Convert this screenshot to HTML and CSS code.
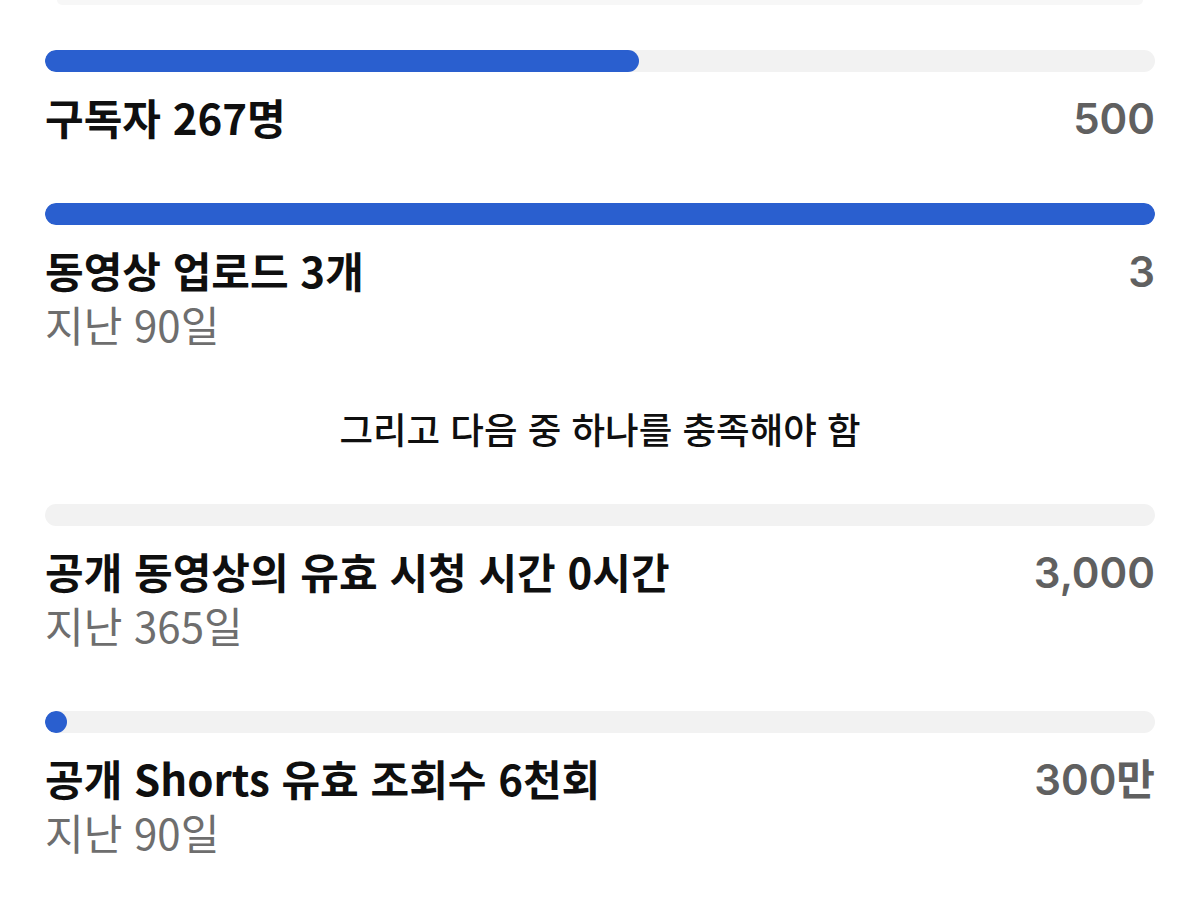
FILE: index.html
```html
<!DOCTYPE html>
<html lang="ko">
<head>
<meta charset="utf-8">
<link rel="stylesheet" href="styles.css">
</head>
<body>
<div class="page">
  <div class="top-edge"></div>
  <div class="list">
    <div class="item">
      <div class="track"><div class="fill" style="width:53.5%"></div></div>
      <div class="row">
        <div class="title">구독자 267명</div>
        <div class="value">500</div>
      </div>
    </div>
    <div class="item">
      <div class="track"><div class="fill" style="width:100%"></div></div>
      <div class="row">
        <div class="title">동영상 업로드 3개</div>
        <div class="value">3</div>
      </div>
      <div class="sub">지난 90일</div>
    </div>
    <div class="divider-text">그리고 다음 중 하나를 충족해야 함</div>
    <div class="item">
      <div class="track"></div>
      <div class="row">
        <div class="title">공개 동영상의 유효 시청 시간 0시간</div>
        <div class="value">3,000</div>
      </div>
      <div class="sub">지난 365일</div>
    </div>
    <div class="item">
      <div class="track"><div class="fill dot"></div></div>
      <div class="row">
        <div class="title">공개 Shorts 유효 조회수 6천회</div>
        <div class="value">300만</div>
      </div>
      <div class="sub">지난 90일</div>
    </div>
  </div>
</div>
</body>
</html>
```
FILE: styles.css
```css
* { box-sizing: border-box; }
html, body {
  margin: 0;
  padding: 0;
  background: #ffffff;
}
body {
  font-family: "Noto Sans CJK KR", "Noto Sans", sans-serif;
  color: #0f0f0f;
}
.page {
  width: 1200px;
  height: 917px;
  overflow: hidden;
}
.top-edge {
  height: 5px;
  margin: 0 57px;
  background: #f7f7f7;
  border-radius: 0 0 18px 18px;
}
.list {
  padding: 45px 45px 0 45px;
  display: flex;
  flex-direction: column;
}
.item {
  display: flex;
  flex-direction: column;
  padding-bottom: 59px;
}
.track {
  height: 22px;
  border-radius: 11px;
  background: #f2f2f2;
  overflow: hidden;
  margin-bottom: 18px;
}
.fill {
  height: 100%;
  background: #2a5fcf;
  border-radius: 11px;
}
.fill.dot {
  width: 22px;
  border-radius: 50%;
}
.row {
  display: flex;
  justify-content: space-between;
  align-items: center;
  height: 54px;
}
.title {
  font-size: 42px;
  font-weight: 700;
  line-height: 54px;
  color: #0f0f0f;
}
.value {
  font-family: "Inter", "Noto Sans CJK KR", sans-serif;
  font-size: 42px;
  font-weight: 600;
  line-height: 54px;
  color: #606060;
  position: relative;
  top: 2px;
}
.sub {
  font-size: 42px;
  font-weight: 400;
  line-height: 54px;
  color: #6e6e6e;
}
.divider-text {
  text-align: center;
  font-size: 36.5px;
  font-weight: 500;
  line-height: 54px;
  margin-top: -8px;
  padding-bottom: 48px;
  color: #0f0f0f;
}
```
